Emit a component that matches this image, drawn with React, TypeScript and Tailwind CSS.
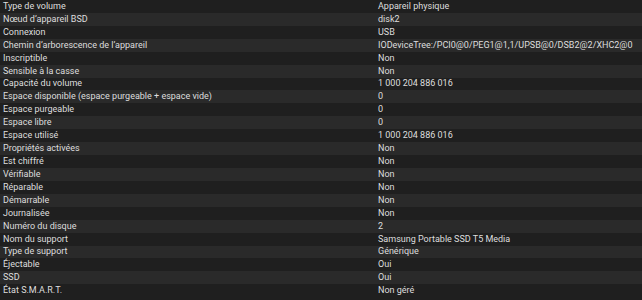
const rows: [string, string][] = [
  ["Type de volume", "Appareil physique"],
  ["Nœud d’appareil BSD", "disk2"],
  ["Connexion", "USB"],
  ["Chemin d’arborescence de l’appareil", "IODeviceTree:/PCI0@0/PEG1@1,1/UPSB@0/DSB2@2/XHC2@0"],
  ["Inscriptible", "Non"],
  ["Sensible à la casse", "Non"],
  ["Capacité du volume", "1 000 204 886 016"],
  ["Espace disponible (espace purgeable + espace vide)", "0"],
  ["Espace purgeable", "0"],
  ["Espace libre", "0"],
  ["Espace utilisé", "1 000 204 886 016"],
  ["Propriétés activées", "Non"],
  ["Est chiffré", "Non"],
  ["Vérifiable", "Non"],
  ["Réparable", "Non"],
  ["Démarrable", "Non"],
  ["Journalisée", "Non"],
  ["Numéro du disque", "2"],
  ["Nom du support", "Samsung Portable SSD T5 Media"],
  ["Type de support", "Générique"],
  ["Éjectable", "Oui"],
  ["SSD", "Oui"],
  ["État S.M.A.R.T.", "Non géré"],
]

export default function App() {
  return (
    <div className="w-[642px] h-[300px] overflow-hidden bg-[#1f1f1f] font-['Roboto',Arial,sans-serif] text-[9px] text-[#dedede]">
      {rows.map(([label, value], i) => (
        <div
          key={i}
          className={`flex h-[12.93px] items-center leading-none ${i % 2 ? "bg-[#2a2a2a]" : "bg-[#1f1f1f]"}`}
        >
          <div className="w-[378px] shrink-0 pl-[3px] whitespace-nowrap">{label}</div>
          <div className="flex-1 whitespace-nowrap">{value}</div>
        </div>
      ))}
    </div>
  )
}
